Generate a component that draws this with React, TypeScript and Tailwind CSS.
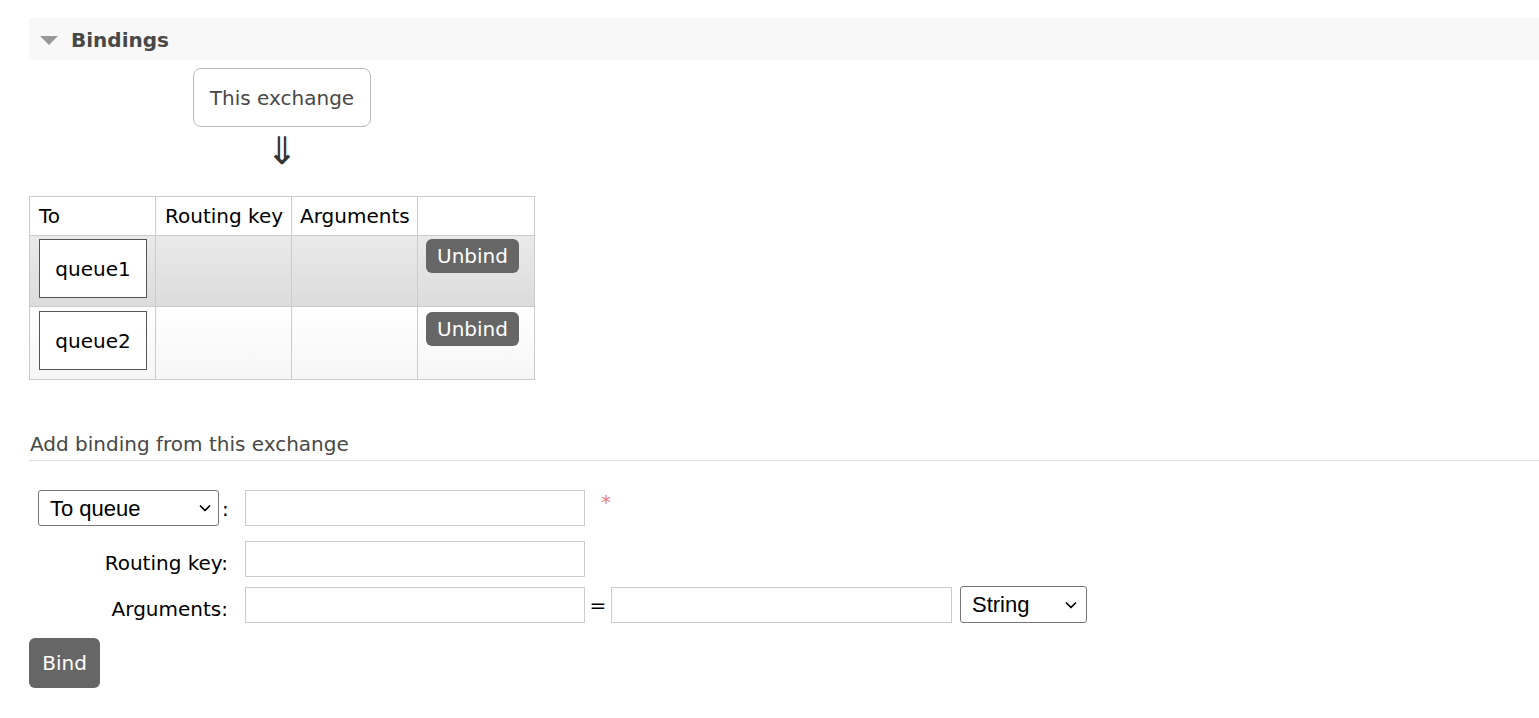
import React from 'react';

const font = { fontFamily: '"DejaVu Sans", Verdana, sans-serif' };
const selectFont = { fontFamily: '"Liberation Sans", Arial, sans-serif' };

const ChevronDown: React.FC = () => (
  <svg className="h-[14px] w-[14px] shrink-0" viewBox="0 0 14 14" fill="none" stroke="currentColor" strokeWidth={1.7}>
    <path d="M2.5 5l4.5 4.5L11.5 5" strokeLinecap="round" strokeLinejoin="round" />
  </svg>
);

const UnbindButton: React.FC = () => (
  <button className="h-[34px] w-[93px] rounded-[6px] bg-[#666] text-[20px] text-white leading-none">Unbind</button>
);

const QueueBox: React.FC<{ name: string }> = ({ name }) => (
  <div className="flex h-[59px] w-[108px] items-center justify-center border border-[#555] bg-white text-[20px] text-black">
    {name}
  </div>
);

export default function App() {
  return (
    <div className="min-h-screen bg-white pt-[18px] pl-[29px] text-[#484848]" style={font}>
      {/* Section header */}
      <div className="flex h-[42px] items-center bg-[#f8f8f8]">
        <span className="ml-[11px] mr-[13px] mt-[2px] h-0 w-0 border-x-[9px] border-t-[9px] border-x-transparent border-t-[#999]" />
        <span className="pt-[2px] text-[20px] font-bold text-[#484848]">Bindings</span>
      </div>

      {/* Exchange node + arrow */}
      <div className="ml-[164px] mt-[8px] flex w-[178px] flex-col items-center">
        <div className="flex h-[59px] w-[178px] items-center justify-center rounded-[8px] border border-[#bbb] text-[20px] text-[#484848]">
          This exchange
        </div>
        <div className="mt-[4px] text-[38px] font-light leading-[40px] text-[#333]">⇓</div>
      </div>

      {/* Bindings table */}
      <table className="mt-[25px] w-[505px] table-fixed border-collapse whitespace-nowrap text-[20px] text-black">
        <colgroup>
          <col className="w-[126px]" />
          <col className="w-[136px]" />
          <col className="w-[126px]" />
          <col className="w-[117px]" />
        </colgroup>
        <thead>
          <tr className="h-[39px]">
            <th className="border border-[#ccc] pl-[9px] text-left font-normal">To</th>
            <th className="border border-[#ccc] pl-[9px] text-left font-normal">Routing key</th>
            <th className="border border-[#ccc] pl-[8px] text-left font-normal">Arguments</th>
            <th className="border border-[#ccc]" />
          </tr>
        </thead>
        <tbody>
          <tr className="h-[71px] bg-gradient-to-b from-[#eaeaea] to-[#dcdcdc]">
            <td className="border border-[#ccc] pl-[9px] align-top pt-[3px]"><QueueBox name="queue1" /></td>
            <td className="border border-[#ccc]" />
            <td className="border border-[#ccc]" />
            <td className="border border-[#ccc] pl-[8px] align-top pt-[3px]"><UnbindButton /></td>
          </tr>
          <tr className="h-[73px] bg-gradient-to-b from-white to-[#f6f6f6]">
            <td className="border border-[#ccc] pl-[9px] align-top pt-[4px]"><QueueBox name="queue2" /></td>
            <td className="border border-[#ccc]" />
            <td className="border border-[#ccc]" />
            <td className="border border-[#ccc] pl-[8px] align-top pt-[5px]"><UnbindButton /></td>
          </tr>
        </tbody>
      </table>

      {/* Add binding */}
      <div className="mt-[52px] border-b border-[#ddd] pb-[4px] pl-[1px] text-[20px] leading-[24px] text-[#484848]">
        Add binding from this exchange
      </div>

      <div className="mt-[29px] flex flex-col text-[20px] text-black">
        <div className="flex h-[36px] items-center">
          <div className="ml-[9px] flex h-[36px] w-[181px] items-center justify-between rounded-[3px] border border-[#767676] bg-white pl-[11px] pr-[6px] text-[22px]" style={selectFont}>
            <span>To queue</span>
            <ChevronDown />
          </div>
          <span className="ml-[3px] w-[23px] pt-[2px]">:</span>
          <div className="h-[36px] w-[340px] border border-[#ccc] bg-white" />
          <span className="ml-[16px] self-start text-[20px] leading-[24px] text-[#f08080]">*</span>
        </div>

        <div className="mt-[15px] flex h-[36px] items-center">
          <span className="w-[199px] pt-[8px] text-right">Routing key:</span>
          <div className="ml-[17px] h-[36px] w-[340px] border border-[#ccc] bg-white" />
        </div>

        <div className="mt-[9px] flex h-[37px] items-center">
          <span className="w-[199px] pt-[8px] text-right">Arguments:</span>
          <div className="ml-[17px] h-[36px] w-[340px] border border-[#ccc] bg-white" />
          <span className="w-[26px] text-center">=</span>
          <div className="h-[36px] w-[341px] border border-[#ccc] bg-white" />
          <div className="ml-[8px] flex h-[37px] w-[127px] items-center justify-between rounded-[3px] border border-[#767676] bg-white pl-[11px] pr-[8px] text-[22px]" style={selectFont}>
            <span>String</span>
            <ChevronDown />
          </div>
        </div>

        <div className="mt-[15px]">
          <button className="h-[50px] w-[71px] rounded-[6px] bg-[#666] text-[20px] text-white">Bind</button>
        </div>
      </div>
    </div>
  );
}
